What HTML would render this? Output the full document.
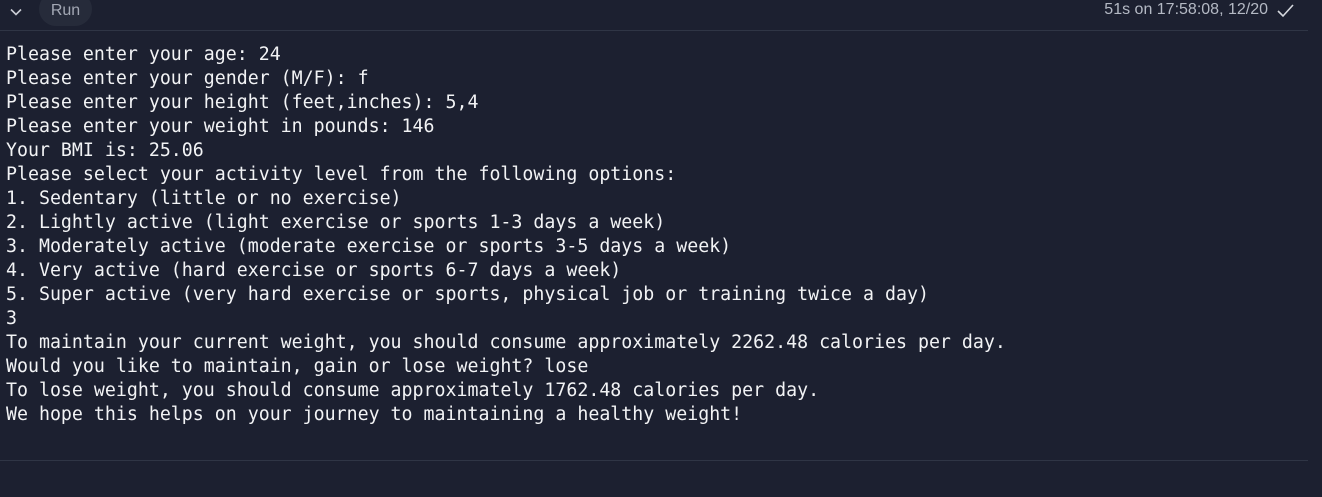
<!DOCTYPE html>
<html><head><meta charset="utf-8"><style>
html,body{margin:0;padding:0;background:#1c2030;width:1322px;height:497px;overflow:hidden;position:relative}
.top{position:absolute;left:0;top:0;width:1308px;height:30px;border-bottom:1px solid #2f3545}
.chev{position:absolute;left:9px;top:5px}
.run{position:absolute;left:39px;top:-8px;width:53px;height:34px;border-radius:17px;background:#262b3a;color:#a3a8b4;font:16px "Liberation Sans",sans-serif;line-height:38px;text-align:center}
.time{position:absolute;right:40px;top:1px;color:#b4b9c4;font:16px "Liberation Sans",sans-serif}
.chk{position:absolute;left:1276px;top:3px}
pre{position:absolute;left:6px;top:43px;margin:0;color:#f2f3f5;font-family:"DejaVu Sans Mono",monospace;font-size:18.25px;line-height:24px}
.bot{position:absolute;left:0;top:460px;width:1308px;border-top:1px solid #2f3545}
</style></head><body>
<div class="top">
<svg class="chev" width="14" height="14" viewBox="0 0 14 14"><path d="M2 4.5 L7 9.5 L12 4.5" fill="none" stroke="#c9ccd4" stroke-width="1.6"/></svg>
<div class="run">Run</div>
<div class="time">51s on 17:58:08, 12/20</div>
<svg class="chk" width="20" height="16" viewBox="0 0 20 16"><path d="M2 8 L7 13 L17 2" fill="none" stroke="#d5d8de" stroke-width="1.6"/></svg>
</div>
<pre>Please enter your age: 24
Please enter your gender (M/F): f
Please enter your height (feet,inches): 5,4
Please enter your weight in pounds: 146
Your BMI is: 25.06
Please select your activity level from the following options:
1. Sedentary (little or no exercise)
2. Lightly active (light exercise or sports 1-3 days a week)
3. Moderately active (moderate exercise or sports 3-5 days a week)
4. Very active (hard exercise or sports 6-7 days a week)
5. Super active (very hard exercise or sports, physical job or training twice a day)
3
To maintain your current weight, you should consume approximately 2262.48 calories per day.
Would you like to maintain, gain or lose weight? lose
To lose weight, you should consume approximately 1762.48 calories per day.
We hope this helps on your journey to maintaining a healthy weight!</pre>
<div class="bot"></div>
</body></html>
